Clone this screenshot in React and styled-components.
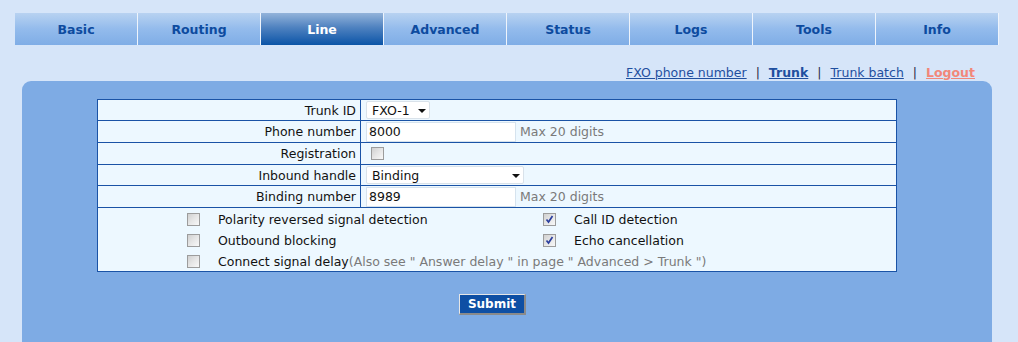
import React from "react";
import styled, { createGlobalStyle, css } from "styled-components";

const Global = createGlobalStyle`
  html, body { margin: 0; padding: 0; }
  body {
    background: #d6e5f9;
    font-family: "DejaVu Sans", Verdana, sans-serif;
    font-size: 12.5px;
    color: #111;
    overflow: hidden;
  }
`;

const Page = styled.div`
  width: 1018px;
  height: 342px;
  overflow: hidden;
  padding-top: 13px;
  box-sizing: border-box;
`;

const TabBar = styled.nav`
  display: flex;
  margin-left: 15px;
  height: 32px;
`;

const Tab = styled.a`
  width: 122px;
  border-right: 1px solid #eef4fc;
  display: flex;
  align-items: center;
  justify-content: center;
  font-weight: bold;
  font-size: 12.5px;
  text-decoration: none;
  padding-top: 1px;
  box-sizing: content-box;
  height: 31px;
  color: ${(p) => (p.$active ? "#ffffff" : "#0d4b9f")};
  background: ${(p) =>
    p.$active
      ? "linear-gradient(to bottom, #93b3da 0%, #4f82c0 45%, #0b54a7 100%)"
      : "linear-gradient(to bottom, #b8d2f1 0%, #93bbec 50%, #7fade6 100%)"};
`;

const LinkRow = styled.div`
  display: flex;
  justify-content: flex-end;
  align-items: center;
  height: 36px;
  padding-top: 20px;
  box-sizing: border-box;
  padding-right: 43px;
  line-height: 16px;
`;

const TopLink = styled.a`
  color: ${(p) => (p.$logout ? "#f2877a" : "#1f4f9f")};
  font-weight: ${(p) => (p.$bold ? "bold" : "normal")};
  text-decoration: underline;
  cursor: pointer;
`;

const Sep = styled.span`
  color: #2a2a4a;
  margin: 0 9px;
`;

const Panel = styled.section`
  margin-left: 22px;
  width: 970px;
  height: 300px;
  background: #7eabe4;
  border-radius: 9px 9px 0 0;
  padding: 18px 0 0 75px;
  box-sizing: border-box;
`;

const FormBox = styled.div`
  width: 800px;
  box-sizing: border-box;
  border: 1px solid #1a53a6;
  background: #edf8ff;
`;

const Row = styled.div`
  display: grid;
  grid-template-columns: 263px 1fr;
  height: ${(p) => p.$h}px;
  border-bottom: 1px solid #1a53a6;
`;

const Label = styled.div`
  border-right: 1px solid #1a53a6;
  display: flex;
  align-items: center;
  justify-content: flex-end;
  padding-right: 4px;
  color: #111;
`;

const Value = styled.div`
  display: flex;
  align-items: center;
  padding-left: 5px;
  gap: 4px;
`;

const SelectBox = styled.div`
  width: ${(p) => p.$w}px;
  height: 18px;
  box-sizing: border-box;
  background: #fff;
  border: 1px solid #d9e2ea;
  border-radius: 2px;
  display: flex;
  align-items: center;
  justify-content: space-between;
  padding: 0 3px 0 5px;
  color: #111;
`;

const Caret = styled.span`
  width: 0;
  height: 0;
  border-left: 4px solid transparent;
  border-right: 4px solid transparent;
  border-top: 4px solid #111;
  margin-top: 2px;
`;

const TextInput = styled.div`
  width: 150px;
  height: 20px;
  box-sizing: border-box;
  background: #fff;
  border: 1px solid #d6e3ee;
  display: flex;
  align-items: center;
  padding-left: 2px;
  color: #111;
`;

const Hint = styled.span`
  color: #7a7a7a;
`;

const boxBase = css`
  width: 13px;
  height: 13px;
  box-sizing: border-box;
  border: 1px solid #9c9c9c;
  background: linear-gradient(135deg, #d0d0d0 0%, #e6e6e6 50%, #f8f8f8 100%);
  display: inline-flex;
  align-items: center;
  justify-content: center;
  flex: none;
`;

const Box = styled.span`
  ${boxBase}
  margin-left: ${(p) => p.$ml || 0}px;
`;

const OptionArea = styled.div`
  display: grid;
  grid-template-columns: 31px 325px 31px 1fr;
  grid-auto-rows: 21px;
  height: 63px;
  padding: 1px 0 0 89px;
  box-sizing: border-box;
  align-items: center;
`;

const OptLabel = styled.span`
  color: #111;
  white-space: nowrap;
  grid-column: ${(p) => (p.$wide ? "2 / span 3" : "auto")};
`;

const Note = styled.span`
  color: #7a7a7a;
`;

const Actions = styled.div`
  padding: 22px 0 0 362px;
`;

const SubmitButton = styled.button`
  width: 67px;
  height: 21px;
  box-sizing: border-box;
  background: #0e4fa4;
  color: #fff;
  font-family: "DejaVu Sans", Verdana, sans-serif;
  font-weight: bold;
  font-size: 12px;
  border-style: solid;
  border-width: 1px 2px 2px 1px;
  border-color: #e6e6e6 #8a8a8a #8a8a8a #e6e6e6;
  padding: 0;
  line-height: 16px;
  cursor: pointer;
`;

function Check({ checked, ml }) {
  return (
    <Box $ml={ml}>
      {checked && (
        <svg width="9" height="9" viewBox="0 0 9 9">
          <path d="M1.5 4.5 L3.5 7 L7.5 1" fill="none" stroke="#2b3f9e" strokeWidth="1.7" />
        </svg>
      )}
    </Box>
  );
}

const tabs = ["Basic", "Routing", "Line", "Advanced", "Status", "Logs", "Tools", "Info"];

export default function App() {
  return (
    <>
      <Global />
      <Page>
        <TabBar>
          {tabs.map((t) => (
            <Tab key={t} $active={t === "Line"}>
              {t}
            </Tab>
          ))}
        </TabBar>
        <LinkRow>
          <TopLink>FXO phone number</TopLink>
          <Sep>|</Sep>
          <TopLink $bold>Trunk</TopLink>
          <Sep>|</Sep>
          <TopLink>Trunk batch</TopLink>
          <Sep>|</Sep>
          <TopLink $logout $bold>Logout</TopLink>
        </LinkRow>
        <Panel>
          <FormBox>
            <Row $h={20}>
              <Label>Trunk ID</Label>
              <Value>
                <SelectBox $w={64}>
                  <span>FXO-1</span>
                  <Caret />
                </SelectBox>
              </Value>
            </Row>
            <Row $h={21}>
              <Label>Phone number</Label>
              <Value>
                <TextInput>8000</TextInput>
                <Hint>Max 20 digits</Hint>
              </Value>
            </Row>
            <Row $h={21}>
              <Label>Registration</Label>
              <Value>
                <Check ml={5} />
              </Value>
            </Row>
            <Row $h={20}>
              <Label>Inbound handle</Label>
              <Value>
                <SelectBox $w={158}>
                  <span>Binding</span>
                  <Caret />
                </SelectBox>
              </Value>
            </Row>
            <Row $h={21}>
              <Label>Binding number</Label>
              <Value>
                <TextInput>8989</TextInput>
                <Hint>Max 20 digits</Hint>
              </Value>
            </Row>
            <OptionArea>
              <Check />
              <OptLabel>Polarity reversed signal detection</OptLabel>
              <Check checked />
              <OptLabel>Call ID detection</OptLabel>
              <Check />
              <OptLabel>Outbound blocking</OptLabel>
              <Check checked />
              <OptLabel>Echo cancellation</OptLabel>
              <Check />
              <OptLabel $wide>
                Connect signal delay
                <Note>(Also see " Answer delay " in page " Advanced &gt; Trunk ")</Note>
              </OptLabel>
            </OptionArea>
          </FormBox>
          <Actions>
            <SubmitButton>Submit</SubmitButton>
          </Actions>
        </Panel>
      </Page>
    </>
  );
}
